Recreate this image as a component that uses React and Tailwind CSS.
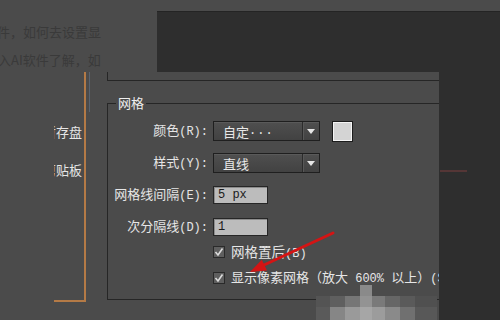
export default function App() {
  const cjk = "font-['Noto_Sans_CJK_SC','Noto_Sans',sans-serif]";
  const mono = "font-['Liberation_Mono',monospace] text-[12px]";
  const Arrow = () => (
    <svg width="8" height="5" viewBox="0 0 8 5">
      <polygon points="0,0 8,0 4,5" fill="#e6e6e6" />
    </svg>
  );
  const Dropdown = ({ children }) => (
    <div className="flex h-[20px] w-[107px] border border-[#1f1f1f] bg-gradient-to-b from-[#4f4f4f] to-[#424242] shadow-[inset_0_1px_0_#5a5a5a]">
      <div className="flex-1 pl-[9px] flex items-center text-[13px] leading-none text-[#e8e8e8] whitespace-nowrap">{children}</div>
      <div className="w-[17px] border-l border-[#2c2c2c] shadow-[inset_1px_0_0_#585858] flex items-center justify-center">
        <Arrow />
      </div>
    </div>
  );
  const Input = ({ text }) => (
    <div className="h-[18px] w-[55px] border border-[#262626] bg-[#bcbcbc] shadow-[inset_1px_1px_0_#8c8c8c] pl-[4px] flex items-center text-[12px] leading-none text-[#1a1a1a] font-['Liberation_Mono',monospace] whitespace-pre">
      {text}
    </div>
  );
  const Check = () => (
    <div className="w-[12px] h-[12px] shrink-0 border border-[#2a2a2a] bg-[#5f5f5f] flex items-center justify-center">
      <svg width="10" height="10" viewBox="0 0 10 10">
        <polyline points="1.5,5 4,8 8.5,1.5" fill="none" stroke="#dcdcdc" strokeWidth="1.6" />
      </svg>
    </div>
  );
  const Label = ({ zh, en }) => (
    <div className="w-[100px] text-right text-[13px] leading-[16px] text-[#e6e6e6] whitespace-nowrap">
      {zh}
      <span className={mono}>{en}</span>
    </div>
  );

  return (
    <div className={`relative w-[500px] h-[320px] overflow-hidden bg-[#4b4b4b] flex flex-col ${cjk}`}>
      <div className="h-[11px] shrink-0" />
      <div className="flex h-[61px] shrink-0">
        <div className="w-[157px] overflow-hidden text-[13px] leading-[16px] text-[#3a3a3a]">
          <div className="whitespace-nowrap mt-[13px] -ml-[3px]">件，如何去设置显</div>
          <div className="whitespace-nowrap mt-[12px] -ml-[2px]">入AI软件了解，如</div>
        </div>
        <div className="flex-1 bg-[#2e2e2e] border-t border-[#242424]" />
      </div>
      <div className="flex flex-1">
        <div className="w-[439px] flex overflow-hidden">
          <div className="w-[107px] shrink-0 flex">
            <div className="ml-[54px] w-[32px] h-[230px] border-r-2 border-b-2 border-[#b47a46] overflow-hidden flex flex-col items-end text-[13px] leading-[16px] text-[#e6e6e6]">
              <div className="mt-[52px] whitespace-nowrap pr-[2px]">暂存盘</div>
              <div className="mt-[22px] whitespace-nowrap pr-[2px]">剪贴板</div>
            </div>
            <div className="w-[1px] h-[40px] ml-[3px] bg-[#5a6470]" />
          </div>
          <div className="flex-1 flex flex-col">
            <div className="h-[9px] border-l border-b border-[#262626]" />
            <div className="relative mt-[22px] h-[197px] border-l border-t border-b border-[#262626] pt-[11px] flex flex-col">
              <div className="absolute left-[8px] -top-[9px] px-[2px] bg-[#4b4b4b] text-[13px] leading-[16px] text-[#eeeeee]">网格</div>
              <div className="flex items-center h-[32px]">
                <Label zh="颜色" en="(R):" />
                <div className="ml-[5px]">
                  <Dropdown>
                    自定<span className={`${mono} tracking-[1px]`}>...</span>
                  </Dropdown>
                </div>
                <div className="ml-[12px] w-[21px] h-[21px] border border-[#1c1c1c]">
                  <div className="w-full h-full border border-[#f4f4f4] bg-[#d4d4d4]" />
                </div>
              </div>
              <div className="flex items-center h-[32px]">
                <Label zh="样式" en="(Y):" />
                <div className="ml-[5px]"><Dropdown>直线</Dropdown></div>
              </div>
              <div className="flex items-center h-[32px]">
                <Label zh="网格线间隔" en="(E):" />
                <div className="ml-[5px]"><Input text="5 px" /></div>
              </div>
              <div className="flex items-center h-[32px]">
                <Label zh="次分隔线" en="(D):" />
                <div className="ml-[5px]"><Input text="1" /></div>
              </div>
              <div className="flex items-center h-[18px] pl-[105px]">
                <Check />
                <span className="ml-[6px] text-[13.5px] leading-[16px] text-[#e6e6e6] whitespace-nowrap">
                  网格置后<span className={mono}>(B)</span>
                </span>
              </div>
              <div className="flex items-center h-[18px] mt-[8px] pl-[105px]">
                <Check />
                <span className="ml-[6px] text-[13px] leading-[16px] text-[#e6e6e6] whitespace-pre">
                  显示像素网格（放大<span className={mono}> 600% </span>以上）<span className={mono}>(S)</span>
                </span>
              </div>
            </div>
          </div>
        </div>
        <div className="flex-1 bg-[#2e2e2e]">
          <div className="mt-[98px] ml-[1px] w-[27px] h-[2px] bg-[#553636]" />
        </div>
      </div>

      <svg className="absolute left-0 top-0 pointer-events-none" width="500" height="320" viewBox="0 0 500 320">
        <rect x="360" y="285" width="12" height="11" fill="#8a8a8a" />
        <rect x="316" y="296" width="14" height="11" fill="#545454" />
        <rect x="330" y="296" width="15" height="11" fill="#5f5f5f" />
        <rect x="345" y="296" width="15" height="11" fill="#767676" />
        <rect x="360" y="296" width="12" height="11" fill="#939393" />
        <rect x="372" y="296" width="13" height="11" fill="#7a7a7a" />
        <rect x="385" y="296" width="15" height="11" fill="#666666" />
        <rect x="400" y="296" width="15" height="11" fill="#5a5a5a" />
        <rect x="415" y="296" width="22" height="11" fill="#505050" />
        <rect x="316" y="307" width="14" height="13" fill="#5a5a5a" />
        <rect x="330" y="307" width="15" height="13" fill="#868686" />
        <rect x="345" y="307" width="15" height="13" fill="#9a9a9a" />
        <rect x="360" y="307" width="12" height="13" fill="#a6a6a6" />
        <rect x="372" y="307" width="13" height="13" fill="#9c9c9c" />
        <rect x="385" y="307" width="15" height="13" fill="#8a8a8a" />
        <rect x="400" y="307" width="15" height="13" fill="#707070" />
        <rect x="415" y="307" width="22" height="13" fill="#585858" />
        <line x1="333" y1="233" x2="264" y2="265" stroke="#d41414" strokeWidth="3" strokeLinecap="round" />
        <polygon points="250,272 261.8,259.7 267,270.5" fill="#d41414" />
      </svg>
    </div>
  );
}
